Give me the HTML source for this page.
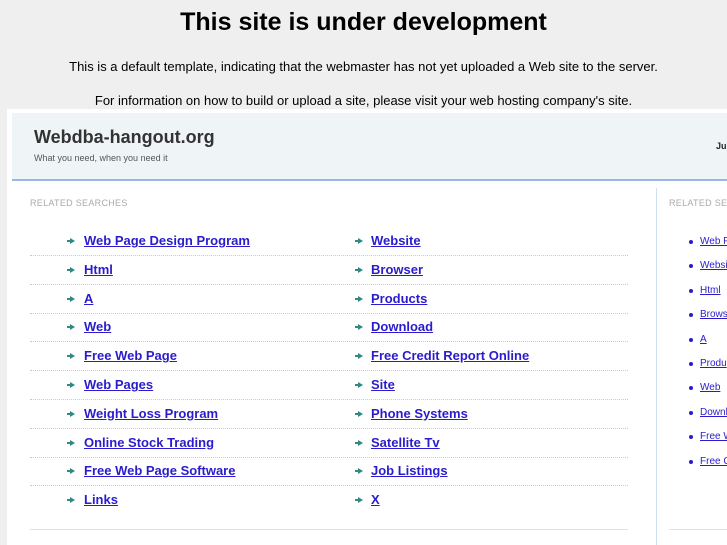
<!DOCTYPE html>
<html><head><meta charset="utf-8"><style>
*{margin:0;padding:0;box-sizing:border-box}
body{width:727px;height:545px;overflow:hidden;background:#efefef;font-family:"Liberation Sans",sans-serif;position:relative}
.a{position:absolute;white-space:nowrap}
h1{position:absolute;left:0;width:727px;text-align:center;top:8px;font-size:25px;font-weight:bold;color:#000}
.p{left:0;width:727px;text-align:center;font-size:13px;color:#000}
#box{position:absolute;left:7px;top:109px;width:720px;height:436px;background:#fff}
#hd{position:absolute;left:12px;top:113px;width:715px;height:68px;background:#eff5f7;border-bottom:2px solid #9ab6e6}
.rs{font-size:9px;color:#aaa;letter-spacing:.3px}
.l{font-size:13px;font-weight:bold;color:#2a1ccc;text-decoration:underline}
.ar{position:absolute;width:0;height:0;border-left:5px solid #2f8a80;border-top:3px solid transparent;border-bottom:3px solid transparent}
.ar:before{content:"";position:absolute;left:-8px;top:-1px;width:4px;height:2px;background:#2f8a80}
.dl{position:absolute;height:0;border-top:1px dotted #b9cce8}
.s{font-size:10px;color:#2a1ccc;text-decoration:underline}
.b{position:absolute;width:4px;height:4px;border-radius:2px;background:#2a1ccc}
#wrap{position:absolute;left:0;top:0;width:727px;height:545px;overflow:hidden}
</style></head><body>
<div id="wrap">
<h1>This site is under development</h1>
<div class="a p" style="top:59px">This is a default template, indicating that the webmaster has not yet uploaded a Web site to the server.</div>
<div class="a p" style="top:93px">For information on how to build or upload a site, please visit your web hosting company's site.</div>
<div id="box"></div>
<div id="hd"></div>
<div class="a" style="left:34px;top:127px;font-size:18px;font-weight:bold;color:#333">Webdba-hangout.org</div>
<div class="a" style="left:34px;top:153px;font-size:9px;color:#555">What you need, when you need it</div>
<div class="a" style="left:716px;top:141px;font-size:9px;font-weight:bold;color:#222">Ju</div>
<div class="a rs" style="left:30px;top:198px">RELATED SEARCHES</div>
<div class="a rs" style="left:669px;top:198px">RELATED SEA</div>
<div style="position:absolute;left:656px;top:188px;width:1px;height:357px;background:#cfdff2"></div>
<div style="position:absolute;left:30px;top:529px;width:598px;height:1px;background:#d6e4f5"></div>
<div style="position:absolute;left:669px;top:529px;width:58px;height:1px;background:#d6e4f5"></div>
<div id="rows"></div>
</div>
<script>
var L=["Web Page Design Program","Html","A","Web","Free Web Page","Web Pages","Weight Loss Program","Online Stock Trading","Free Web Page Software","Links"];
var R=["Website","Browser","Products","Download","Free Credit Report Online","Site","Phone Systems","Satellite Tv","Job Listings","X"];
var S=["Web P","Websi","Html","Brows","A","Produ","Web","Downl","Free W","Free C"];
var h="";
for(var i=0;i<10;i++){var y=233+i*28.8;
h+='<div class="ar" style="left:70px;top:'+(y+5)+'px"></div><div class="a l" style="left:84px;top:'+y+'px">'+L[i]+'</div>';
h+='<div class="ar" style="left:358px;top:'+(y+5)+'px"></div><div class="a l" style="left:371px;top:'+y+'px">'+R[i]+'</div>';
if(i<9)h+='<div class="dl" style="left:30px;width:598px;top:'+(y+22)+'px"></div>';
var z=236+i*24.4;
h+='<div class="b" style="left:689px;top:'+(z+4)+'px"></div><div class="a s" style="left:700px;top:'+z+'px">'+S[i]+'</div>';}
document.getElementById("rows").innerHTML=h;
</script>
</body></html>
